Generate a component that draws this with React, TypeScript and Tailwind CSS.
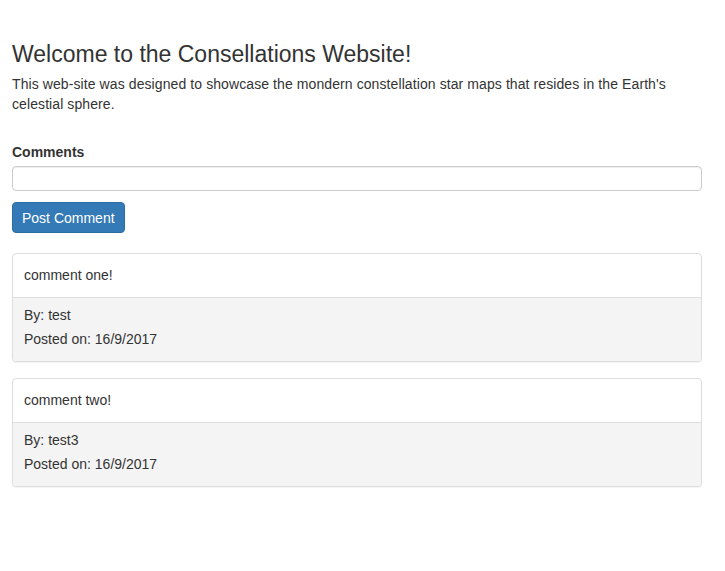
import React from "react";

const comments = [
  { text: "comment one!", by: "test", date: "16/9/2017" },
  { text: "comment two!", by: "test3", date: "16/9/2017" },
];

export default function App() {
  return (
    <div
      className="min-h-[571px] bg-white pl-[12px] pr-[23px] text-[#333] text-[14px] leading-[20px]"
      style={{ fontFamily: '"Liberation Sans", Arial, Helvetica, sans-serif' }}
    >
      <h3 className="pt-[41px] text-[23px] leading-[26px] font-normal">
        Welcome to the Consellations Website!
      </h3>
      <p className="mt-[7px] tracking-[0.09px]">
        This web-site was designed to showcase the mondern constellation star maps that resides in the Earth's celestial sphere.
      </p>
      <div className="mt-[28px] flex flex-col">
        <label className="font-bold">Comments</label>
        <input
          type="text"
          className="mt-[4px] h-[25px] w-full rounded-[4px] border border-[#ccc] bg-white px-[8px] shadow-[inset_0_1px_1px_rgba(0,0,0,0.075)] outline-none"
        />
      </div>
      <button className="mt-[11px] h-[31px] rounded-[4px] border border-[#2e6da4] bg-[#337ab7] px-[9px] text-white">
        Post Comment
      </button>
      <div className="mt-[20px] flex flex-col gap-[16px]">
        {comments.map((c) => (
          <div
            key={c.text}
            className="overflow-hidden rounded-[4px] border border-[#ddd] bg-white shadow-[0_1px_1px_rgba(0,0,0,0.05)]"
          >
            <div className="px-[11px] pt-[11px] pb-[12px]">{c.text}</div>
            <div className="flex flex-col gap-[4px] border-t border-[#ddd] bg-[#f4f4f4] px-[11px] pt-[7px] pb-[12px]">
              <div>By: {c.by}</div>
              <div>Posted on: {c.date}</div>
            </div>
          </div>
        ))}
      </div>
    </div>
  );
}
